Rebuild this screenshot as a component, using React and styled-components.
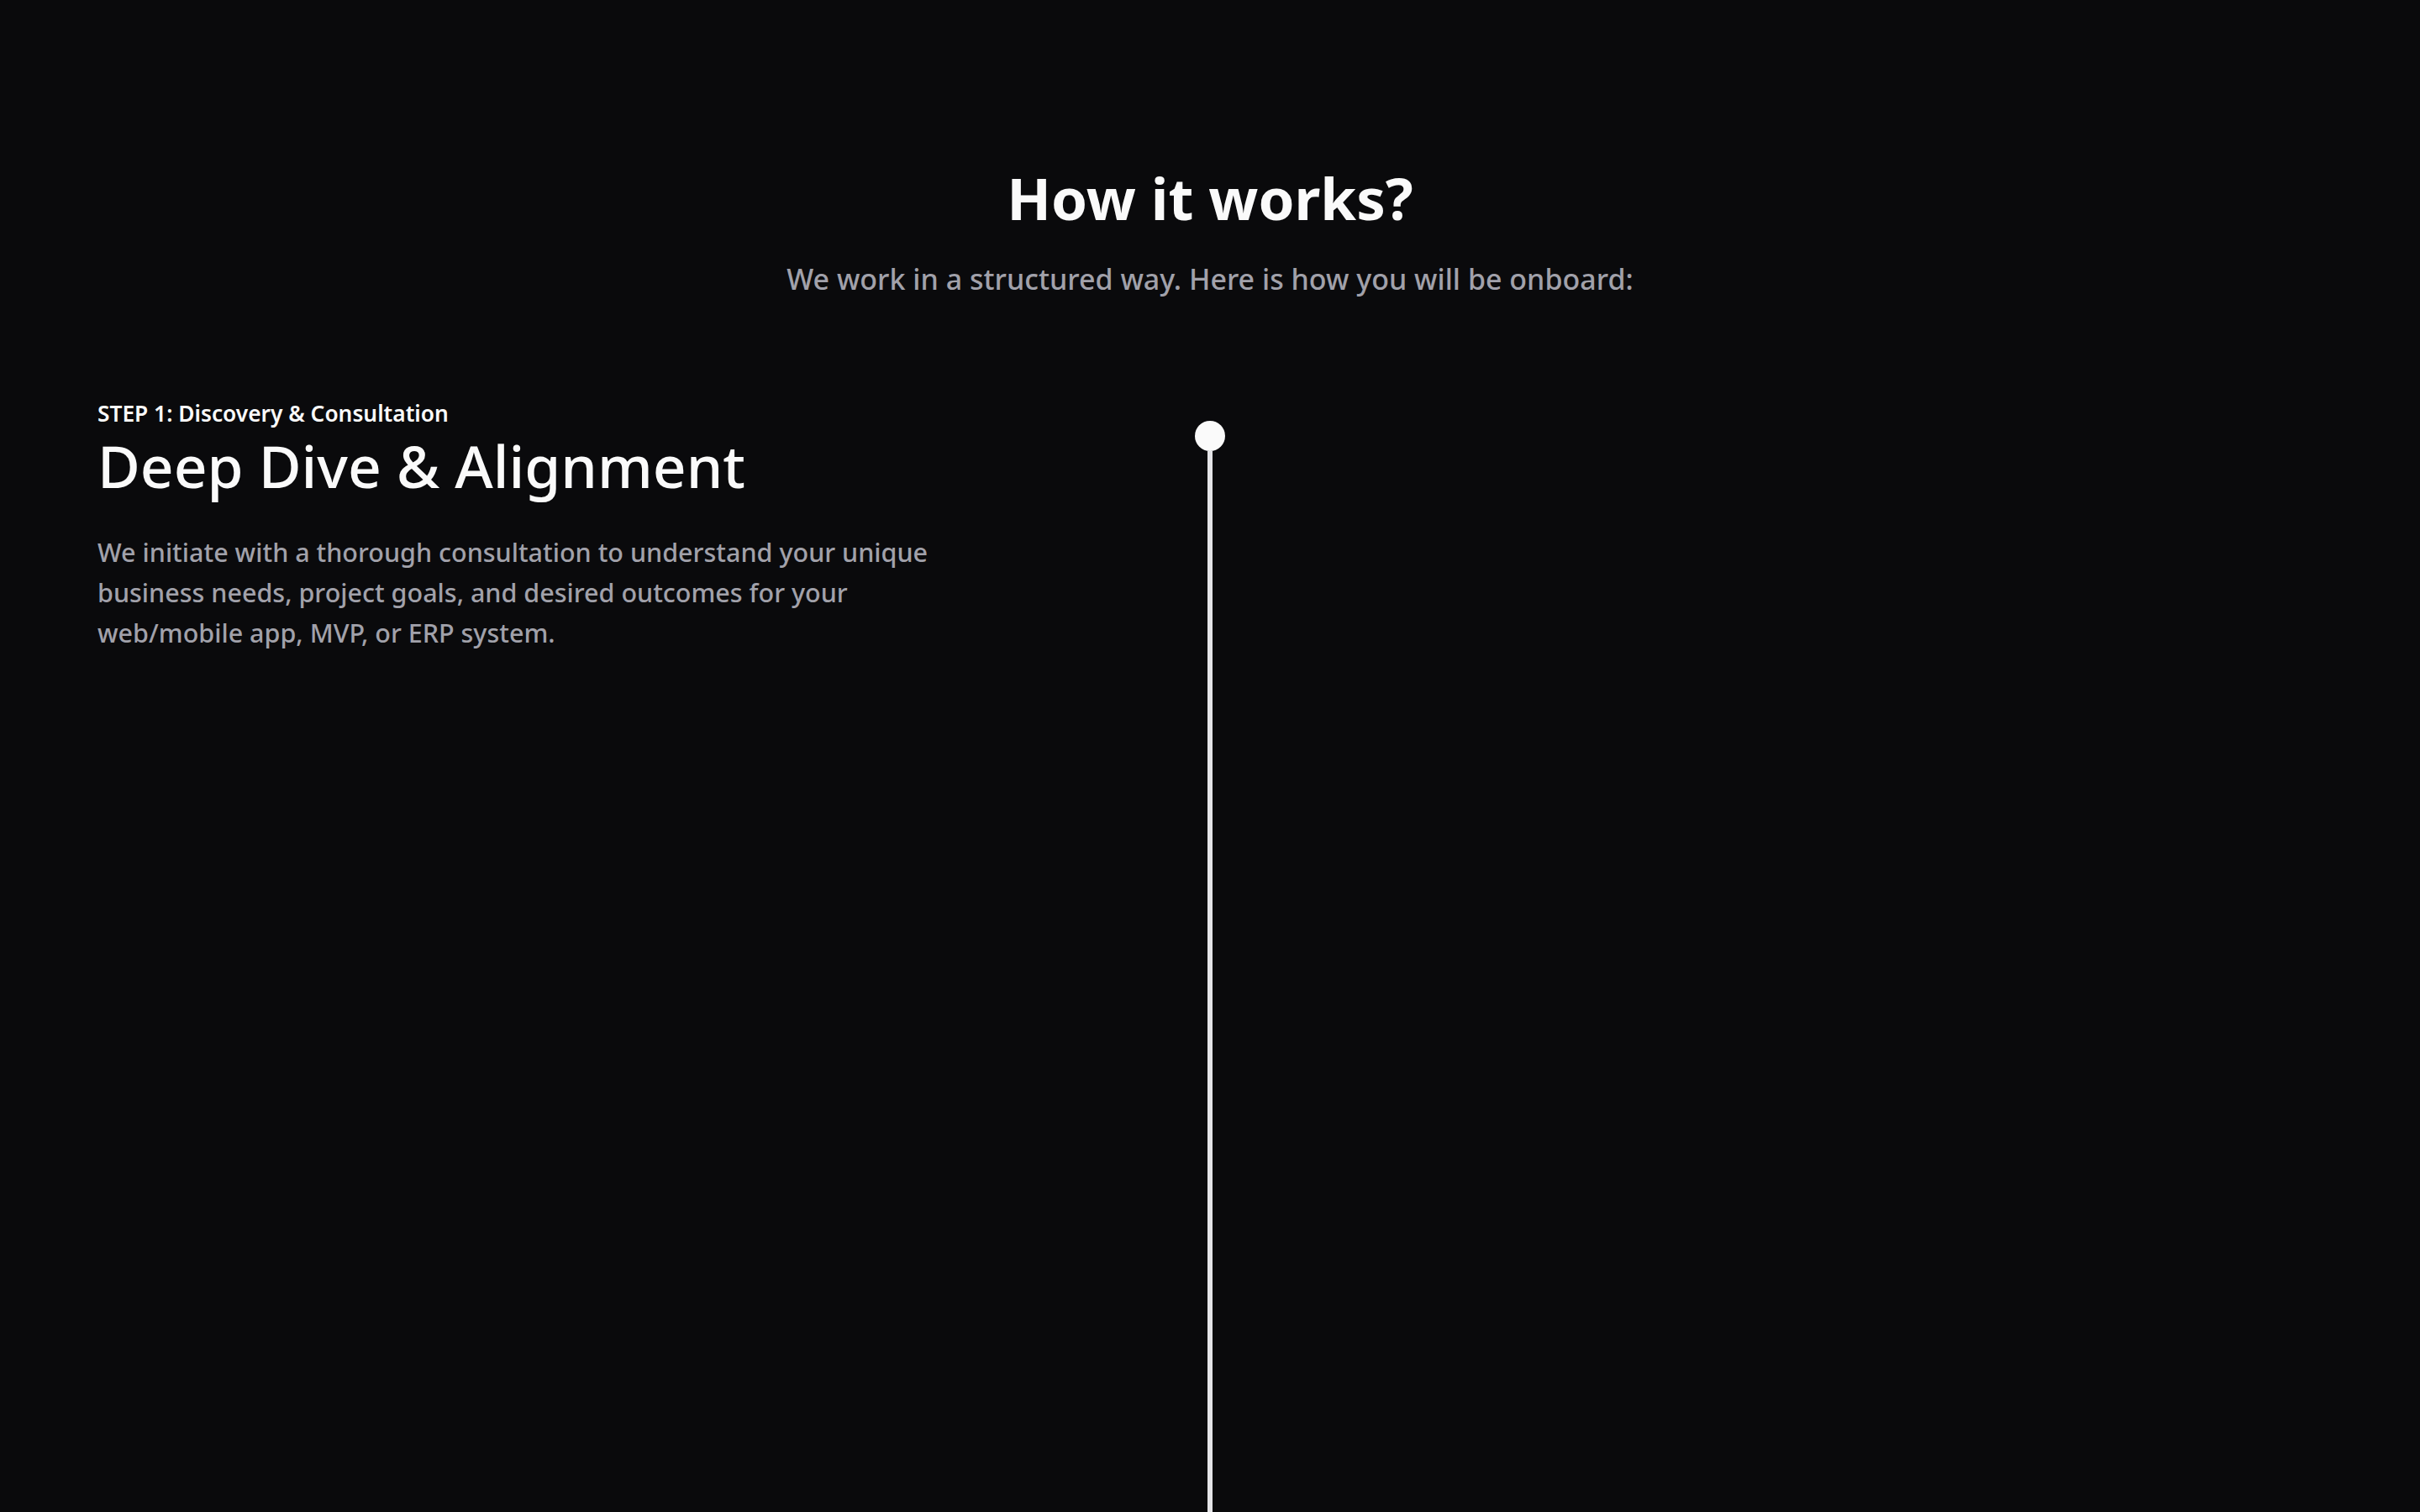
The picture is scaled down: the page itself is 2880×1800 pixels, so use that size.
import React from "react";
import styled, { createGlobalStyle } from "styled-components";

const GlobalStyle = createGlobalStyle`
  html, body {
    margin: 0;
    padding: 0;
    background: #0a0a0c;
  }
  body {
    font-family: "Noto Sans", "Open Sans", sans-serif;
    color: #fafafa;
  }
  * { box-sizing: border-box; }
`;

const Section = styled.section`
  min-height: 100vh;
  padding-top: 194px;
  background: #0a0a0c;
  overflow: hidden;
`;

const Header = styled.header`
  display: flex;
  flex-direction: column;
  align-items: center;
  text-align: center;
`;

const Title = styled.h2`
  margin: 0;
  font-size: 69px;
  line-height: 1.2;
  font-weight: 700;
  color: #fafafa;
`;

const Subtitle = styled.p`
  margin: 32px 0 0;
  font-size: 34px;
  line-height: 1.4;
  font-weight: 500;
  color: #a1a1aa;
`;

const Timeline = styled.div`
  display: grid;
  grid-template-columns: 1fr 36px 1fr;
  padding: 0 116px;
  margin-top: 117px;
  min-height: 1400px;
`;

const StepContent = styled.div`
  display: flex;
  flex-direction: column;
  max-width: 1020px;
`;

const StepLabel = styled.span`
  font-size: 26.3px;
  line-height: 1.5;
  font-weight: 600;
  color: #fafafa;
`;

const StepTitle = styled.h3`
  margin: 0;
  font-size: 69.5px;
  line-height: 1.18;
  font-weight: 500;
  color: #fafafa;
`;

const StepText = styled.p`
  margin: 38px 0 0;
  font-size: 30.5px;
  line-height: 48px;
  font-weight: 500;
  color: #a1a1aa;
`;

const Track = styled.div`
  display: flex;
  flex-direction: column;
  align-items: center;
  padding-top: 28px;
`;

const Dot = styled.span`
  width: 36px;
  height: 36px;
  border-radius: 50%;
  background: #fafafa;
  flex-shrink: 0;
`;

const Line = styled.span`
  width: 6px;
  flex: 1;
  background: #e4e4e7;
`;

const steps = [
  {
    label: "STEP 1: Discovery & Consultation",
    title: "Deep Dive & Alignment",
    text: "We initiate with a thorough consultation to understand your unique business needs, project goals, and desired outcomes for your web/mobile app, MVP, or ERP system.",
  },
];

export default function App() {
  return (
    <>
      <GlobalStyle />
      <Section>
        <Header>
          <Title>How it works?</Title>
          <Subtitle>We work in a structured way. Here is how you will be onboard:</Subtitle>
        </Header>
        <Timeline>
          {steps.map((step) => (
            <StepContent key={step.label}>
              <StepLabel>{step.label}</StepLabel>
              <StepTitle>{step.title}</StepTitle>
              <StepText>{step.text}</StepText>
            </StepContent>
          ))}
          <Track>
            <Dot />
            <Line />
          </Track>
          <div />
        </Timeline>
      </Section>
    </>
  );
}
